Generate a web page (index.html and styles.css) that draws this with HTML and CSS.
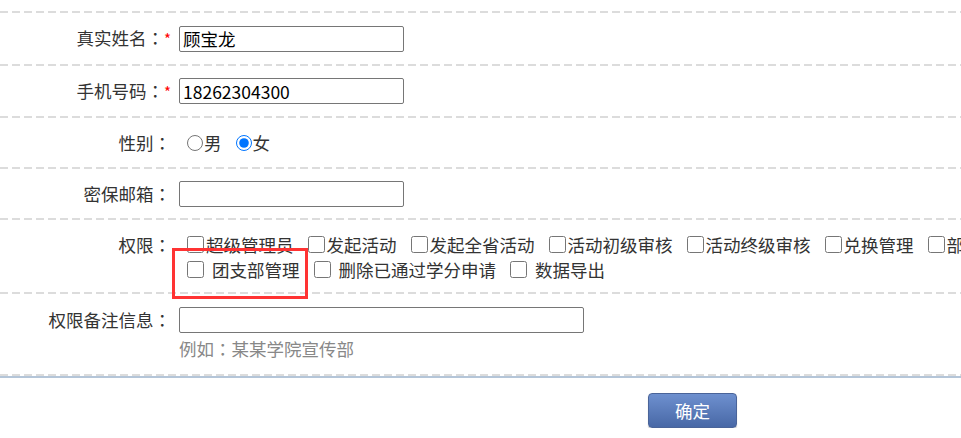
FILE: index.html
```html
<!DOCTYPE html>
<html lang="zh-CN">
<head>
    <meta charset="UTF-8">
    <meta name="viewport" content="width=device-width, initial-scale=1.0">
    <title>编辑管理员</title>
    <link rel="stylesheet" href="styles.css">
</head>
<body>
    <form class="edit-form">
        <div class="row row-first r-a">
            <div class="lbl">真实姓名<i class="colon" lang="zh-TW">：</i><em class="req">*</em></div>
            <div class="val"><input type="text" class="txt" value="顾宝龙"></div>
        </div>
        <div class="row r-b">
            <div class="lbl">手机号码<i class="colon" lang="zh-TW">：</i><em class="req">*</em></div>
            <div class="val"><input type="text" class="txt" value="18262304300"></div>
        </div>
        <div class="row r-c">
            <div class="lbl">性别<i class="colon" lang="zh-TW">：</i></div>
            <div class="val radios">
                <label class="opt"><input type="radio" name="sex" value="1">男</label>
                <label class="opt"><input type="radio" name="sex" value="2" checked>女</label>
            </div>
        </div>
        <div class="row r-d">
            <div class="lbl">密保邮箱<i class="colon" lang="zh-TW">：</i></div>
            <div class="val"><input type="text" class="txt" value=""></div>
        </div>
        <div class="row r-e top">
            <div class="lbl lbl-line">权限<i class="colon" lang="zh-TW">：</i></div>
            <div class="val perms">
                <label class="opt"><input type="checkbox">超级管理员</label>
                <label class="opt"><input type="checkbox">发起活动</label>
                <label class="opt"><input type="checkbox">发起全省活动</label>
                <label class="opt"><input type="checkbox">活动初级审核</label>
                <label class="opt"><input type="checkbox">活动终级审核</label>
                <label class="opt"><input type="checkbox">兑换管理</label>
                <label class="opt"><input type="checkbox">部门管理</label>
                <label class="opt sp"><input type="checkbox">团支部管理</label>
                <label class="opt sp"><input type="checkbox">删除已通过学分申请</label>
                <label class="opt sp"><input type="checkbox">数据导出</label>
            </div>
            <div class="mark"></div>
        </div>
        <div class="row r-f top">
            <div class="lbl">权限备注信息<i class="colon" lang="zh-TW">：</i></div>
            <div class="val">
                <input type="text" class="txt wide" value="">
                <div class="hint">例如<i class="colon" lang="zh-TW">：</i>某某学院宣传部</div>
            </div>
        </div>
        <div class="actions">
            <button type="button" class="btn">确定</button>
        </div>
    </form>
</body>
</html>
```

FILE: styles.css
```css
html {
    overflow: hidden;
}
body {
    margin: 0;
    padding: 0;
    background: #fff;
    font-family: "Noto Sans CJK SC", "Noto Sans", sans-serif;
    font-size: 17.5px;
    color: #333;
}
.edit-form {
    padding-top: 13px;
}
.row {
    box-sizing: border-box;
    display: flex;
    align-items: center;
    position: relative;
    padding-bottom: 2px;
    background: repeating-linear-gradient(90deg, #dcdcdc 0 8px, transparent 8px 12px) left bottom / 100% 2px no-repeat;
}
.row.top {
    align-items: flex-start;
}
.row-first::before {
    content: "";
    position: absolute;
    left: 0;
    right: 0;
    top: -2px;
    height: 2px;
    background: repeating-linear-gradient(90deg, #dcdcdc 0 8px, transparent 8px 12px);
}
.r-a { height: 53px; }
.r-b { height: 52px; }
.r-c { height: 51px; }
.r-d { height: 51px; }
.r-e { height: 74px; padding-top: 12px; }
.r-f { height: 82px; padding-top: 13px; }
.lbl {
    flex: none;
    width: 171px;
    text-align: right;
    line-height: 26px;
    white-space: nowrap;
}
.lbl-line {
    line-height: 25px;
}
.colon {
    font-style: normal;
    font-family: "Noto Sans CJK TC", "Noto Sans CJK SC", sans-serif;
    font-feature-settings: "locl" 0;
}
.req {
    font-style: normal;
    color: #f00;
    font-size: 15px;
}
.val {
    margin-left: 8px;
}
.txt {
    box-sizing: border-box;
    display: block;
    width: 225px;
    height: 26px;
    margin: 0;
    padding: 0 3px;
    border: 1px solid #767676;
    border-radius: 2px;
    font-family: inherit;
    font-size: 17.5px;
    color: #000;
    outline: none;
}
.txt.wide {
    width: 405px;
}
.hint {
    margin-top: 3px;
    line-height: 25px;
    color: #888;
}
.radios {
    display: flex;
    align-items: center;
    padding-left: 8px;
    height: 26px;
}
.opt {
    display: inline-flex;
    align-items: center;
    margin-right: 14px;
    height: 25px;
    line-height: 25px;
    white-space: nowrap;
}
.radios input {
    width: 16px;
    height: 16px;
    margin: 0 1px 0 0;
}
.perms {
    flex: none;
    width: 900px;
    display: flex;
    flex-wrap: wrap;
    padding-left: 8px;
    box-sizing: border-box;
}
.perms input {
    width: 17px;
    height: 17px;
    margin: 0 2px 0 0;
}
.perms .sp input {
    margin-right: 8px;
}
.mark {
    position: absolute;
    left: 172px;
    top: 28px;
    width: 130px;
    height: 45px;
    border: 3px solid #f33;
}
.actions {
    border-top: 2px solid #b4c5d8;
    padding: 15px 0 0 648px;
}
.btn {
    width: 89px;
    height: 35px;
    border: 1px solid #4a6499;
    border-radius: 4px;
    background: linear-gradient(#6e90cf, #4868a6);
    box-shadow: 0 1px 1px rgba(0, 0, 0, 0.25);
    color: #fff;
    font-family: inherit;
    font-size: 17.5px;
    cursor: pointer;
}
```
